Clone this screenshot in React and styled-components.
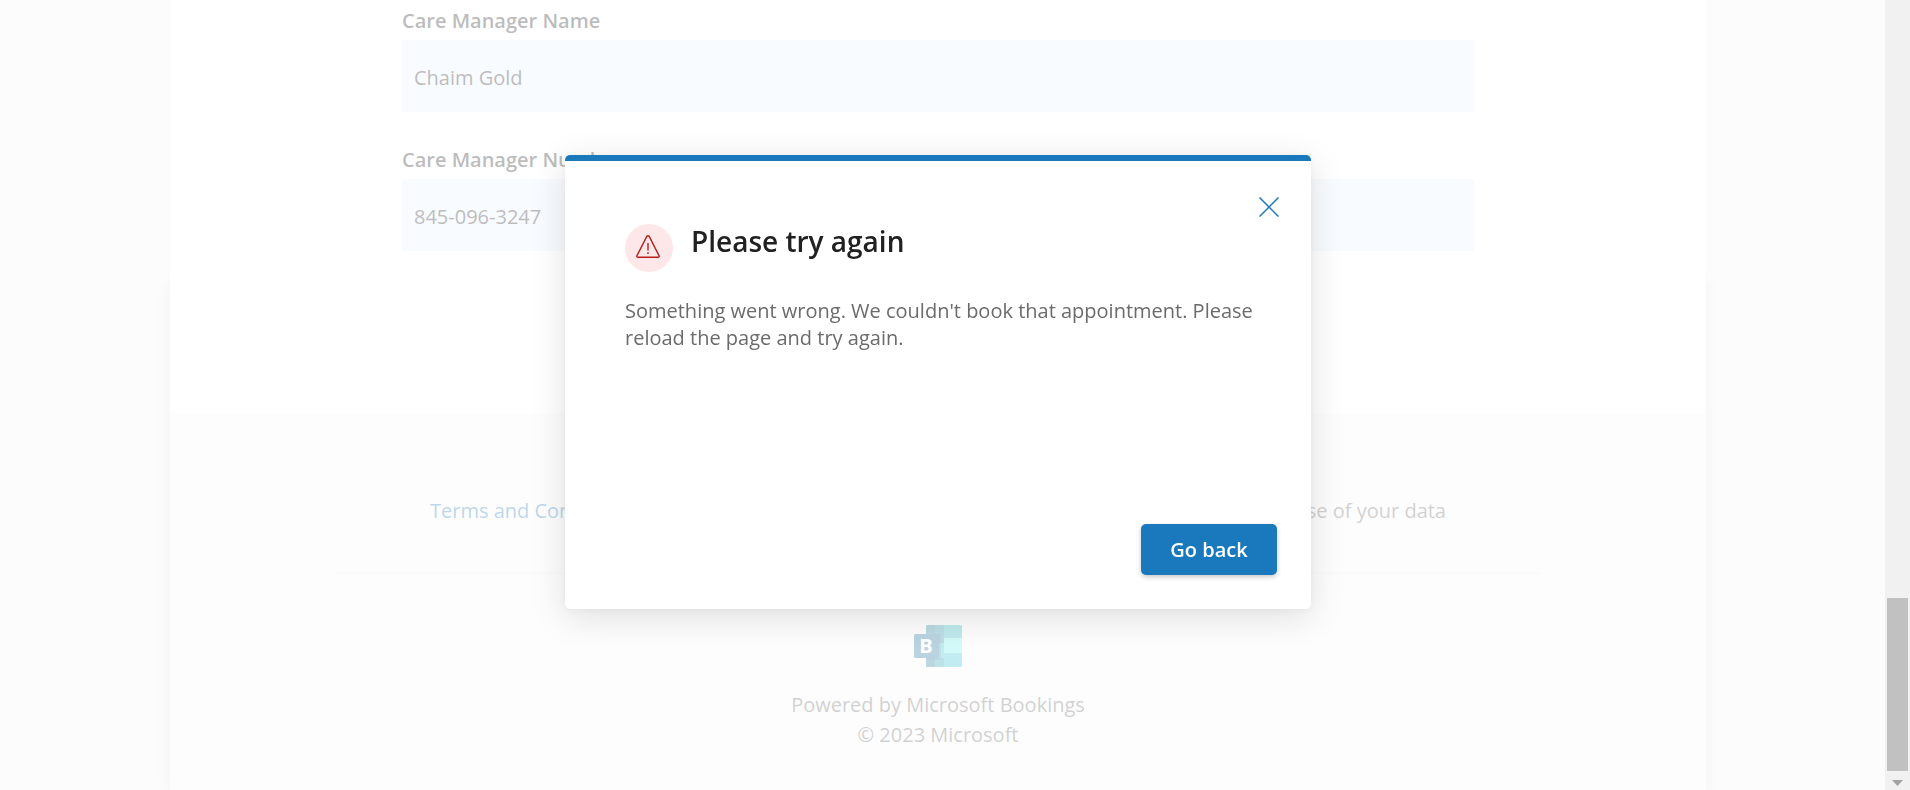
import React, { useState } from 'react';
import styled, { createGlobalStyle } from 'styled-components';

const GlobalStyle = createGlobalStyle`
  * {
    box-sizing: border-box;
  }

  body {
    margin: 0;
    background: #f5f5f5;
    color: #202020;
    font-family: 'Segoe UI', 'Open Sans', 'Noto Sans', sans-serif;
    font-size: 20px;
    line-height: 27px;
  }

  button,
  input {
    font: inherit;
  }
`;

const Viewport = styled.div`
  display: flex;
  height: 100vh;
  overflow: hidden;
`;

const Page = styled.div`
  flex: 1;
  display: flex;
  justify-content: center;
  padding-right: 9px;
`;

const Sheet = styled.div`
  width: 100%;
  max-width: 1536px;
  display: flex;
  flex-direction: column;
`;

const Form = styled.form`
  position: relative;
  z-index: 1;
  display: flex;
  flex-direction: column;
  align-items: center;
  gap: 34px;
  padding: 7px 0 28px;
  background: #fff;
`;

const Field = styled.div`
  width: 100%;
  max-width: 1072px;
  display: flex;
  flex-direction: column;
  gap: 6px;
`;

const Label = styled.label`
  font-weight: 600;
`;

const Input = styled.input`
  width: 100%;
  height: 72px;
  padding: 2px 12px 0;
  border: none;
  background: #e8f0fe;
  color: #202020;
`;

const Bottom = styled.div`
  flex: 1;
  display: flex;
  flex-direction: column;
  background: #fff;
  box-shadow: 0 4px 16px rgba(0, 0, 0, 0.14);
`;

const Spacer = styled.div`
  height: 134px;
`;

const Footer = styled.footer`
  flex: 1;
  display: flex;
  flex-direction: column;
  align-items: center;
  background: #f8f8f8;
  color: #666;
`;

const Legal = styled.div`
  width: 100%;
  max-width: 1202px;
  display: flex;
  justify-content: space-between;
  padding: 84px 93px 48px;
  border-bottom: 2px solid #efefef;
`;

const Link = styled.a`
  color: #1a78bc;
  text-decoration: none;
`;

const Powered = styled.div`
  display: flex;
  flex-direction: column;
  align-items: center;
  padding-top: 51px;
  line-height: 30px;
  text-align: center;
`;

const LogoIcon = styled.svg`
  width: 48px;
  height: 42px;
  margin-bottom: 23px;
`;

const ScrollTrack = styled.div`
  width: 25px;
  display: flex;
  flex-direction: column;
  justify-content: flex-end;
  align-items: center;
  gap: 9px;
  padding-bottom: 4px;
  background: #f1f1f1;
  z-index: 3;
`;

const ScrollThumb = styled.div`
  width: 21px;
  height: 22%;
  background: #c1c1c1;
`;

const Overlay = styled.div`
  position: fixed;
  inset: 0 25px 0 0;
  z-index: 2;
  display: flex;
  align-items: center;
  justify-content: center;
  padding: 0 9px 26px 0;
  background: rgba(255, 255, 255, 0.7);
`;

const Dialog = styled.div`
  width: 746px;
  min-height: 454px;
  display: flex;
  flex-direction: column;
  padding: 34px 34px 34px 60px;
  border-top: 6px solid #1a78bc;
  border-radius: 5px;
  background: #fff;
  box-shadow: 0 8px 36px rgba(0, 0, 0, 0.12), 0 1px 6px rgba(0, 0, 0, 0.04);
`;

const CloseButton = styled.button`
  align-self: flex-end;
  width: 24px;
  height: 24px;
  display: flex;
  align-items: center;
  justify-content: center;
  margin-right: -4px;
  padding: 0;
  border: none;
  background: none;
  color: #1a78bc;
  cursor: pointer;
`;

const DialogHeader = styled.div`
  display: flex;
  gap: 18px;
  margin-top: 5px;
`;

const WarningBadge = styled.span`
  width: 48px;
  height: 48px;
  display: flex;
  align-items: center;
  justify-content: center;
  padding: 0 2px 4px 0;
  border-radius: 50%;
  background: #fde7e9;
`;

const Title = styled.h2`
  margin: 0;
  color: #212121;
  font-size: 28px;
  font-weight: 600;
  line-height: 34px;
`;

const Message = styled.p`
  margin: 25px 0 0;
  color: #6b6b6b;
`;

const PrimaryButton = styled.button`
  align-self: flex-end;
  width: 136px;
  height: 51px;
  margin-top: auto;
  padding: 0;
  border: none;
  border-radius: 5px;
  background: #1a78bc;
  color: #fff;
  font-weight: 600;
  box-shadow: 0 2px 5px rgba(0, 0, 0, 0.22);
  cursor: pointer;
`;

function BookingsLogo() {
  return (
    <LogoIcon viewBox="0 0 48 42" aria-hidden="true">
      <rect x="12" width="36" height="42" rx="1.5" fill="#30c3d4" />
      <path d="M13.5 0H21v42h-7.5a1.5 1.5 0 0 1-1.5-1.5v-39A1.5 1.5 0 0 1 13.5 0z" fill="#1b7c99" />
      <path d="M21 0h9v18h-9z" fill="#2590a8" />
      <path d="M30 0h16.5A1.5 1.5 0 0 1 48 1.5V13H30z" fill="#27b3bd" />
      <path d="M30 13h18v15H30z" fill="#6ceeeb" />
      <path d="M21 33h9v9h-9z" fill="#239bb0" />
      <path d="M12 9h13.5a1.5 1.5 0 0 1 1.5 1.5V35H12z" fill="#0b4a66" opacity="0.35" />
      <rect y="9" width="25" height="24" rx="1.5" fill="#166c98" />
      <text x="12" y="28" textAnchor="middle" fontSize="20" fontWeight="700" fill="#fff">
        B
      </text>
    </LogoIcon>
  );
}

function App() {
  const [open, setOpen] = useState(true);
  const [name, setName] = useState('Chaim Gold');
  const [number, setNumber] = useState('845-096-3247');

  const close = () => setOpen(false);

  return (
    <>
      <GlobalStyle />
      <Viewport>
        <Page>
          <Sheet>
            <Form>
              <Field>
                <Label htmlFor="manager-name">Care Manager Name</Label>
                <Input id="manager-name" value={name} onChange={(e) => setName(e.target.value)} />
              </Field>
              <Field>
                <Label htmlFor="manager-number">Care Manager Number</Label>
                <Input id="manager-number" value={number} onChange={(e) => setNumber(e.target.value)} />
              </Field>
            </Form>
            <Bottom>
              <Spacer />
              <Footer>
                <Legal>
                  <Link href="#terms">Terms and Conditions</Link>
                  <span>use of your data</span>
                </Legal>
                <Powered>
                  <BookingsLogo />
                  <span>Powered by Microsoft Bookings</span>
                  <span>© 2023 Microsoft</span>
                </Powered>
              </Footer>
            </Bottom>
          </Sheet>
        </Page>
        <ScrollTrack>
          <ScrollThumb />
          <svg width="11" height="6" viewBox="0 0 11 6" aria-hidden="true">
            <path d="M0 0h11L5.5 6z" fill="#a3a3a3" />
          </svg>
        </ScrollTrack>
      </Viewport>

      {open && (
        <Overlay>
          <Dialog role="alertdialog" aria-labelledby="dialog-title" aria-describedby="dialog-message">
            <CloseButton type="button" aria-label="Close" onClick={close}>
              <svg width="20" height="20" viewBox="0 0 20 20" fill="none" stroke="currentColor" strokeWidth="1.5">
                <path d="M0.5 0.5l19 19M19.5 0.5l-19 19" />
              </svg>
            </CloseButton>
            <DialogHeader>
              <WarningBadge>
                <svg width="24" height="23" viewBox="0 0 24 23" fill="none" stroke="#b3201a" strokeWidth="1.4">
                  <path d="M10.8 1.4a1.4 1.4 0 0 1 2.4 0l9.9 19.4a1.1 1.1 0 0 1-1 1.5H1.9a1.1 1.1 0 0 1-1-1.5z" />
                  <path d="M12 8v7.5M12 17.2v1.9" />
                </svg>
              </WarningBadge>
              <Title id="dialog-title">Please try again</Title>
            </DialogHeader>
            <Message id="dialog-message">
              Something went wrong. We couldn't book that appointment. Please reload the page and try again.
            </Message>
            <PrimaryButton type="button" onClick={close}>Go back</PrimaryButton>
          </Dialog>
        </Overlay>
      )}
    </>
  );
}

export default App;
